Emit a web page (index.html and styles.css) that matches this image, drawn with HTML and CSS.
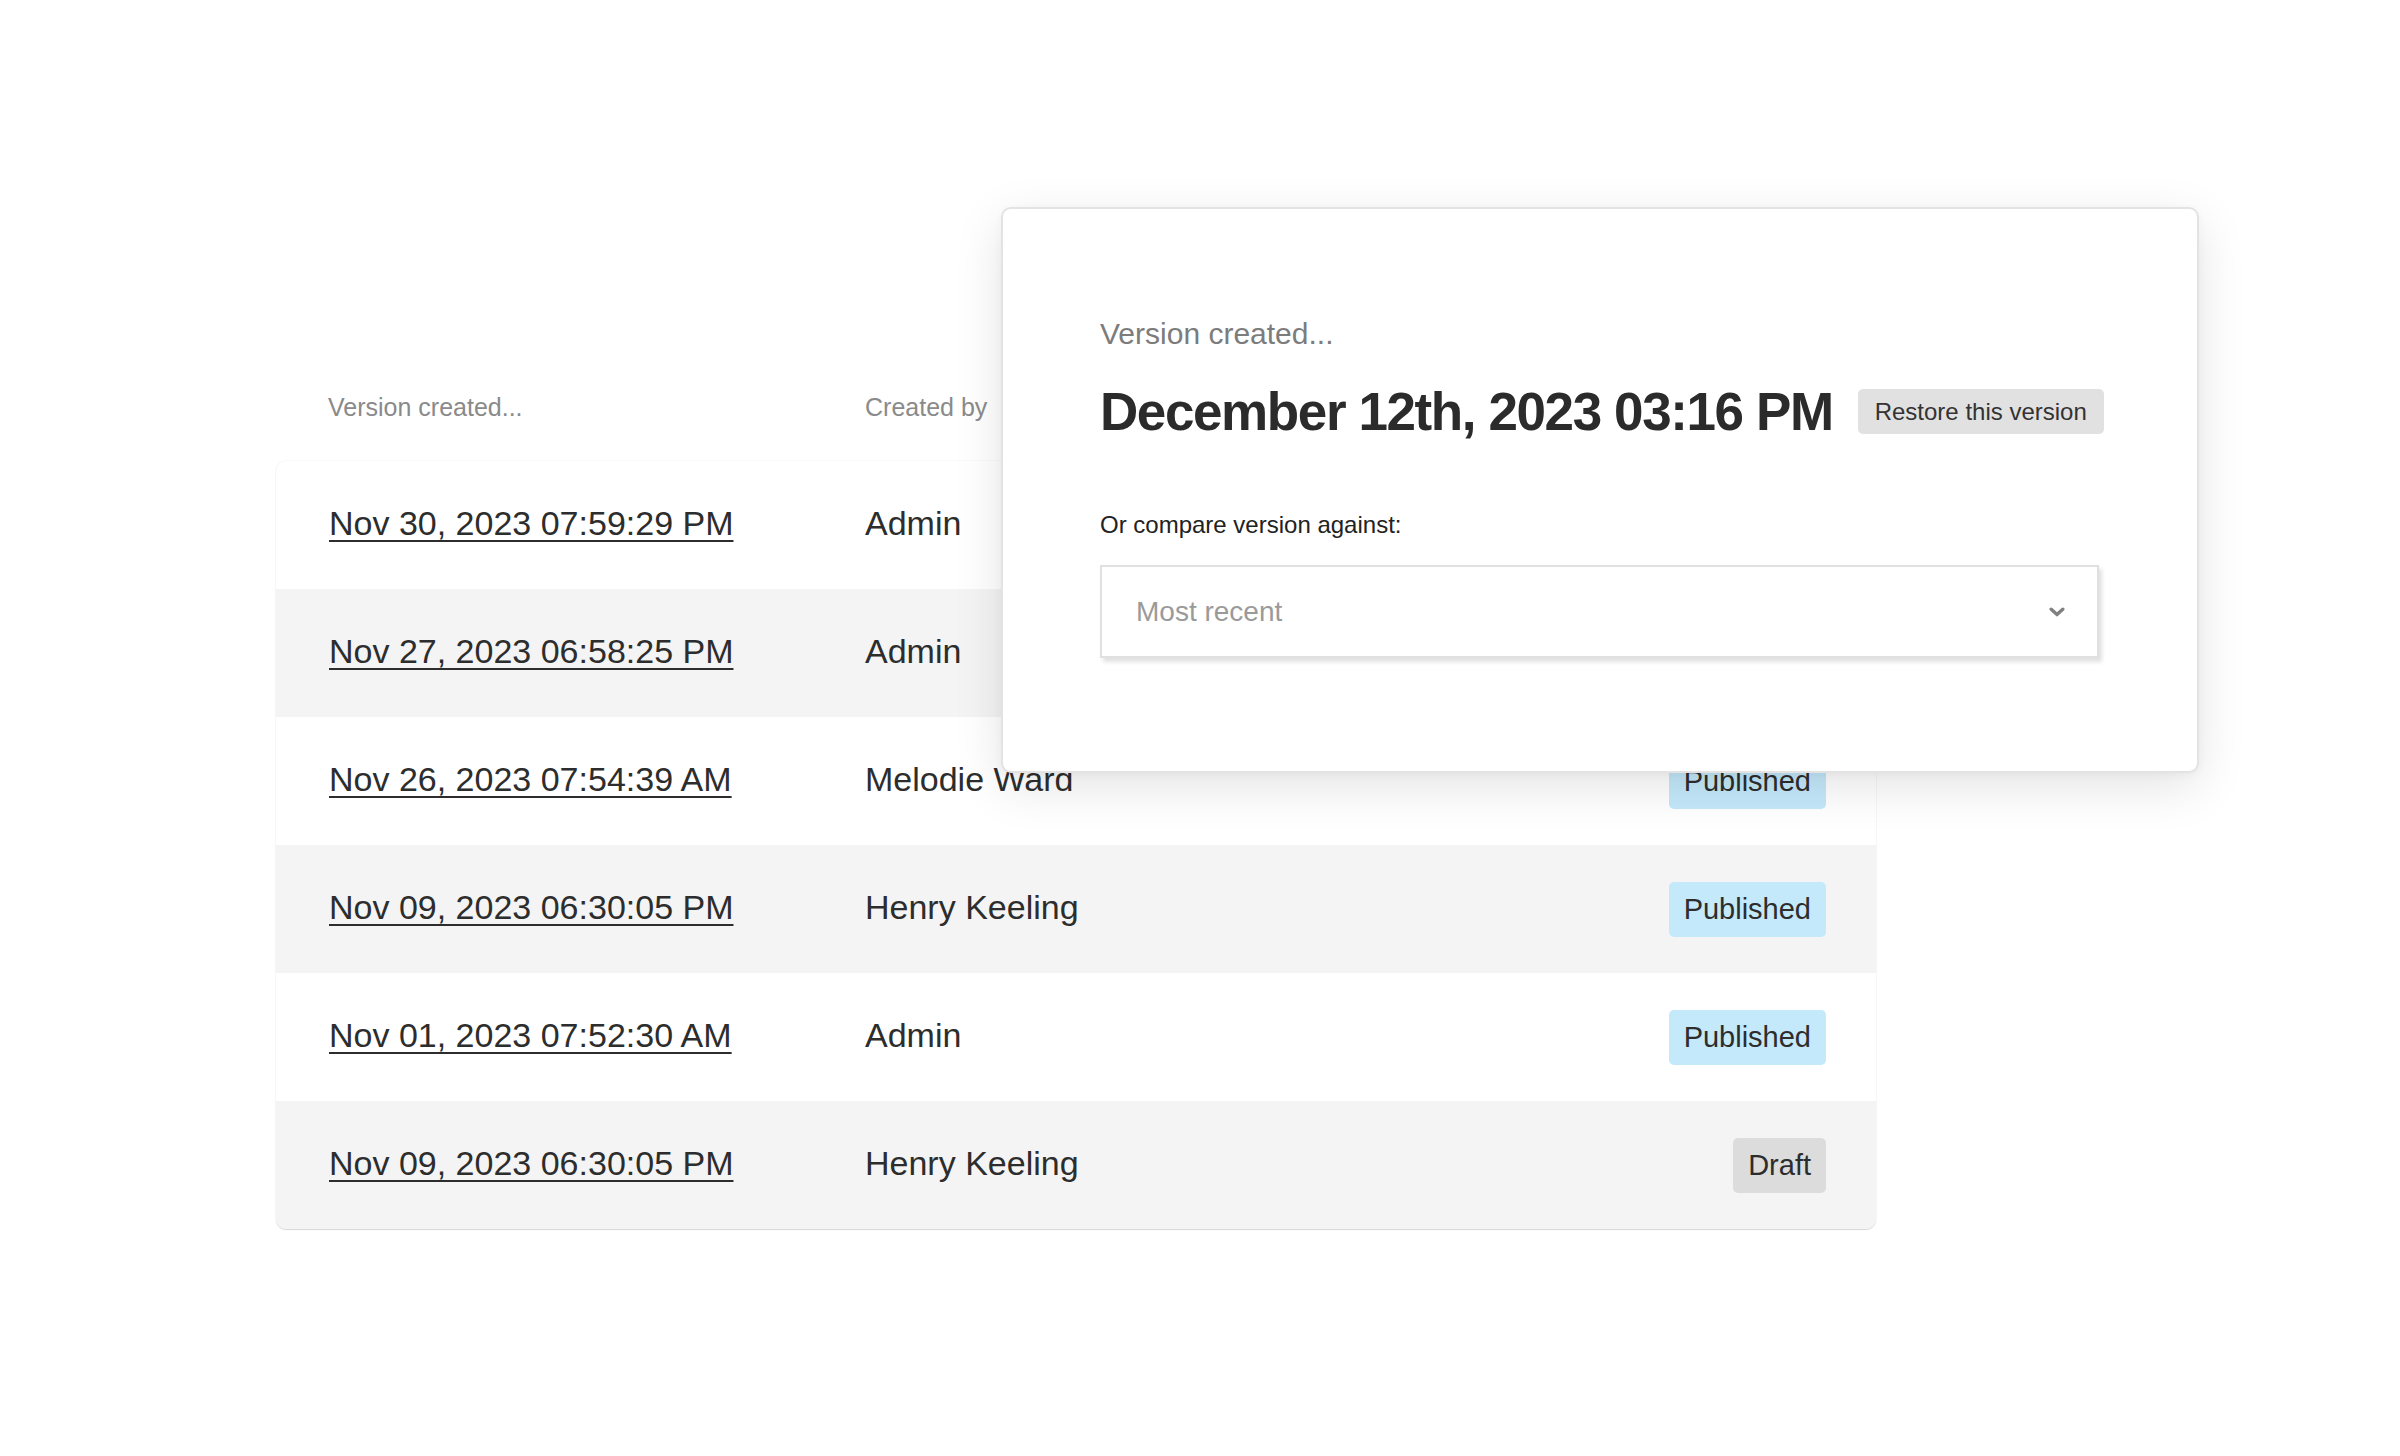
FILE: index.html
```html
<!DOCTYPE html>
<html lang="en">
<head>
<meta charset="utf-8">
<title>Versions</title>
<link rel="stylesheet" href="styles.css">
</head>
<body>
<main class="stage">
  <section class="versions">
    <div class="versions-head">
      <span>Version created...</span>
      <span>Created by</span>
      <span></span>
    </div>
    <div class="versions-card">
      <div class="row"><a class="date" href="#">Nov 30, 2023 07:59:29 PM</a><span class="who">Admin</span><span class="badge badge-pub">Published</span></div>
      <div class="row row-alt"><a class="date" href="#">Nov 27, 2023 06:58:25 PM</a><span class="who">Admin</span><span class="badge badge-pub">Published</span></div>
      <div class="row"><a class="date" href="#">Nov 26, 2023 07:54:39 AM</a><span class="who">Melodie Ward</span><span class="badge badge-pub">Published</span></div>
      <div class="row row-alt"><a class="date" href="#">Nov 09, 2023 06:30:05 PM</a><span class="who">Henry Keeling</span><span class="badge badge-pub">Published</span></div>
      <div class="row"><a class="date" href="#">Nov 01, 2023 07:52:30 AM</a><span class="who">Admin</span><span class="badge badge-pub">Published</span></div>
      <div class="row row-alt"><a class="date" href="#">Nov 09, 2023 06:30:05 PM</a><span class="who">Henry Keeling</span><span class="badge badge-draft">Draft</span></div>
    </div>
  </section>

  <aside class="popover">
    <div class="pop-label">Version created...</div>
    <div class="pop-title-row">
      <h1 class="pop-title">December 12th, 2023 03:16 PM</h1>
      <button class="restore" type="button">Restore this version</button>
    </div>
    <div class="pop-compare">Or compare version against:</div>
    <div class="select">
      <span class="select-value">Most recent</span>
      <svg class="chev" width="16" height="10" viewBox="0 0 16 10" aria-hidden="true"><path d="M2.2 2.2 L8 7.6 L13.8 2.2" fill="none" stroke="#808080" stroke-width="3.4" stroke-linecap="round" stroke-linejoin="round"/></svg>
    </div>
  </aside>
</main>
</body>
</html>
```

FILE: styles.css
```css
html, body {
  margin: 0;
  padding: 0;
  background: #ffffff;
}

body {
  font-family: "Liberation Sans", Arial, sans-serif;
  color: #2d2d2d;
  width: 2400px;
  height: 1456px;
  overflow: hidden;
}

.stage {
  position: relative;
  padding: 392px 0 0 276px;
  box-sizing: border-box;
  width: 2400px;
  height: 1456px;
}

.versions {
  width: 1600px;
}

.versions-head,
.row {
  display: grid;
  grid-template-columns: 537px 1fr auto;
  align-items: center;
  padding: 0 50px 0 53px;
}

.versions-head {
  height: 30px;
  line-height: 30px;
  margin-bottom: 39px;
  font-size: 25px;
  color: #8a8a8a;
  padding-left: 52px;
}

.versions-card {
  border-radius: 10px;
  overflow: hidden;
  background: #ffffff;
  box-shadow: 0 1px 1px rgba(0, 0, 0, 0.14), 0 0 0 1px rgba(0, 0, 0, 0.025);
}

.row {
  height: 128px;
  box-sizing: border-box;
  padding-bottom: 5px;
  font-size: 34px;
  line-height: 40px;
}

.row-alt {
  background: #f4f4f4;
}

.date {
  color: #2d2d2d;
  text-decoration: underline;
  text-decoration-thickness: 2px;
  text-underline-offset: 5px;
}

.who {
  color: #2d2d2d;
  margin-left: -1px;
}

.badge {
  display: inline-block;
  font-size: 29px;
  line-height: 55px;
  height: 55px;
  padding: 0 15px;
  border-radius: 5px;
  color: #2d2d2d;
  margin-top: 5px;
}

.badge-pub {
  background: #c4e9fb;
}

.badge-draft {
  background: #dcdcdc;
}

.popover {
  position: absolute;
  left: 1001px;
  top: 207px;
  width: 1198px;
  height: 566px;
  box-sizing: border-box;
  padding: 107px 98px 0 97px;
  background: #ffffff;
  border: 2px solid #e3e3e3;
  border-radius: 10px;
  box-shadow: 0 14px 50px rgba(0, 0, 0, 0.11), 0 2px 8px rgba(0, 0, 0, 0.04);
}

.pop-label {
  font-size: 30px;
  line-height: 36px;
  color: #7c7c7c;
}

.pop-title-row {
  display: flex;
  align-items: center;
  gap: 25px;
  margin-top: 33px;
  height: 53px;
}

.pop-title {
  margin: 0;
  font-size: 53px;
  line-height: 53px;
  font-weight: 700;
  letter-spacing: -1.4px;
  color: #2b2b2b;
  white-space: nowrap;
}

.restore {
  font-family: "Liberation Sans", Arial, sans-serif;
  font-size: 24px;
  height: 45px;
  padding: 0 17px;
  border: none;
  border-radius: 5px;
  background: #e1e1e1;
  color: #333333;
  white-space: nowrap;
}

.pop-compare {
  margin-top: 72px;
  font-size: 24px;
  line-height: 29px;
  color: #222222;
}

.select {
  margin-top: 26px;
  height: 93px;
  box-sizing: border-box;
  display: flex;
  align-items: center;
  justify-content: space-between;
  padding: 0 32px 0 34px;
  border: 2px solid #e0e0e0;
  background: #ffffff;
  box-shadow: 3px 4px 4px rgba(0, 0, 0, 0.12);
}

.select-value {
  font-size: 28px;
  color: #9a9a9a;
}

.chev {
  display: block;
}
```
